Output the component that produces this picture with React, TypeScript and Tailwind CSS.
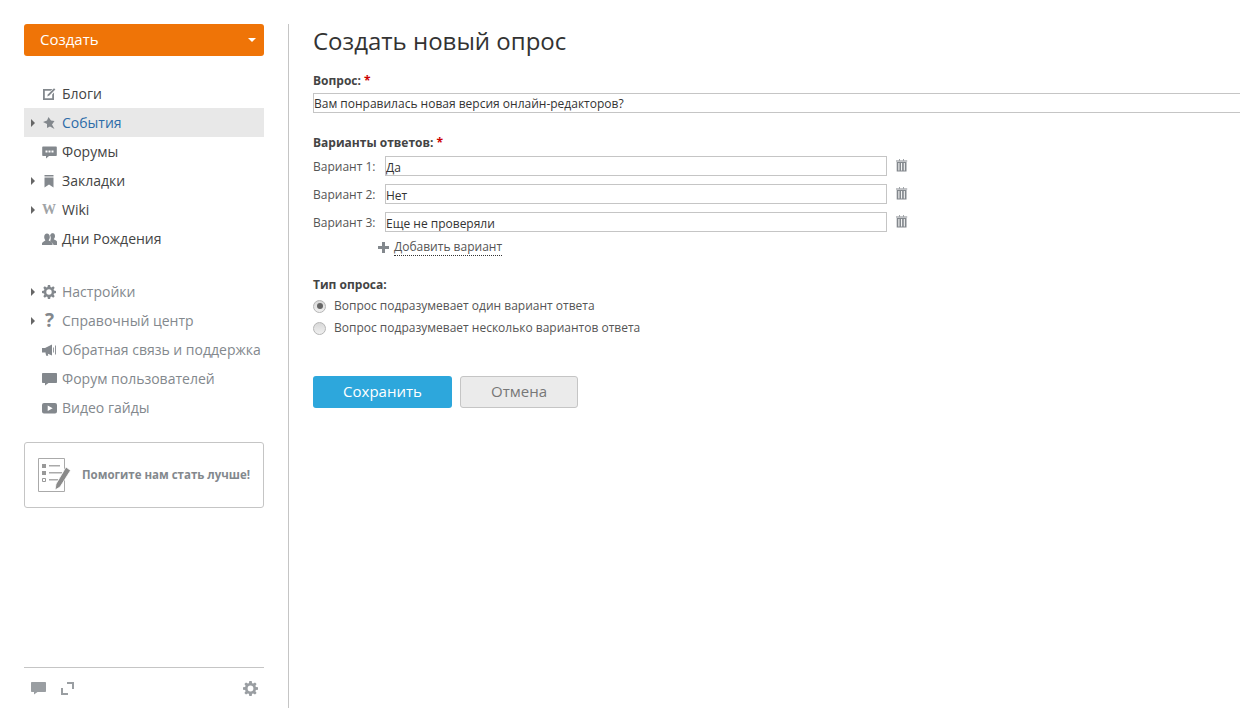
import React from 'react';

const iconClass = 'w-[14px] h-[14px] fill-[#83888d]';

const EditIcon = () => (
  <svg viewBox="0 0 14 14" className={iconClass}>
    <path d="M1 2h9.500L8.600 3.800H2.800v7.400h7.400V7.400L12 5.600V13H1z" />
    <path d="M12 1.200l1.400 1.400-6 6-2.200.8.800-2.200z" />
  </svg>
);
const PinIcon = () => (
  <svg viewBox="0 0 14 14" className={iconClass}>
    <path d="M6.500 1L9 4.500l3.500.5L10 8.500l2.500 4.500L8 10.500 5 12V8L1 6l4-1.500z" />
  </svg>
);
const ForumIcon = () => (
  <svg viewBox="0 0 15 14" className="w-[15px] h-[14px] fill-[#83888d]">
    <path fillRule="evenodd" d="M1 1.500h13a.8.8 0 0 1 .8.8v8a.8.8 0 0 1-.8.8H7l-3 2.400v-2.400H1a.8.8 0 0 1-.8-.8v-8a.8.8 0 0 1 .8-.8zM3.500 5.500v2h2v-2zm3 0v2h2v-2zm3 0v2h2v-2z" />
  </svg>
);
const BookmarkIcon = () => (
  <svg viewBox="0 0 14 14" className={iconClass}>
    <path d="M2.500 1h9v1.600h-9zM2.500 3.600h9V13.500L7 10.500l-4.500 3z" />
  </svg>
);
const PeopleIcon = () => (
  <svg viewBox="0 0 15 14" className="w-[15px] h-[14px] fill-[#83888d]">
    <path d="M10.200 1c1.700 0 2.800 1.300 2.800 3 0 1.200-.5 2.300-1.300 3 .2.700 2.300 1.100 3.300 2.500V13h-3.500c-.3-1.800-2.100-2.700-3.500-3.400.5-1 .8-2.200.8-3.500 0-1-.3-1.900-.7-2.600.5-1.500 1.300-2.500 2.600-2.500z" />
    <path d="M5 1.500c1.700 0 2.800 1.500 2.800 3.500 0 1.200-.5 2.500-1.200 3.200.2.800 3.400 1.200 3.900 3V13H0v-1.800c.5-1.800 3.200-2.200 3.400-3-.7-.7-1.200-2-1.200-3.200 0-2 1.100-3.500 2.800-3.500z" />
  </svg>
);
const GearIcon = ({ cls = iconClass }: { cls?: string }) => (
  <svg viewBox="0 0 14 14" className={cls}>
    <path fillRule="evenodd" d="M5.900 0h2.200l.4 2 1 .4L11.200 1.300l1.500 1.500-1.100 1.700.4 1L14 5.900v2.200l-2 .4-.4 1 1.100 1.700-1.500 1.500-1.700-1.100-1 .4-.4 2H5.900l-.4-2-1-.4-1.700 1.100-1.500-1.500 1.100-1.700-.4-1-2-.4V5.900l2-.4.4-1L1.300 2.800l1.500-1.500 1.700 1.100 1-.4zM7 4.300a2.700 2.700 0 1 0 0 5.400 2.700 2.700 0 0 0 0-5.400z" />
  </svg>
);
const SpeakerIcon = () => (
  <svg viewBox="0 0 15 14" className="w-[15px] h-[14px] fill-[#83888d]">
    <path d="M0 5h3v4.500H0zM3 5l7-3.500v11L3 9.500zM3.500 10h2.200l.5 2.800H4.200z" />
    <path d="M11 4.500h.8v5H11zM13 2.500h.9v9H13z" />
  </svg>
);
const BubbleIcon = ({ cls }: { cls: string }) => (
  <svg viewBox="0 0 15 14" className={cls}>
    <path d="M.8 1h13.400a.8.8 0 0 1 .8.8v8.400a.8.8 0 0 1-.8.8H6.500L3 13.500V11H.8a.8.8 0 0 1-.8-.8V1.800A.8.8 0 0 1 .8 1z" />
  </svg>
);
const VideoIcon = () => (
  <svg viewBox="0 0 15 14" className="w-[15px] h-[14px] fill-[#83888d]">
    <path fillRule="evenodd" d="M2 2h11a2 2 0 0 1 2 2v6.500a2 2 0 0 1-2 2H2a2 2 0 0 1-2-2V4a2 2 0 0 1 2-2zm3.700 2.500v5.500l5-2.750z" />
  </svg>
);
const TrashIcon = () => (
  <svg viewBox="0 0 12 13" className="w-[12px] h-[13px] fill-[#83888d]">
    <path d="M0 1.400h11.200v1H0zM3 .2h1v1H3zM7 .2h1v1H7z" />
    <path fillRule="evenodd" d="M.7 3h9.800v9.600H.7zM2.400 4v7.600h1V4zm2.700 0v7.600h1V4zm2.700 0v7.600h1V4z" />
  </svg>
);

type Item = { label: string; icon: React.ReactNode; arrow?: boolean; active?: boolean };

const topItems: Item[] = [
  { label: 'Блоги', icon: <EditIcon /> },
  { label: 'События', icon: <PinIcon />, arrow: true, active: true },
  { label: 'Форумы', icon: <ForumIcon /> },
  { label: 'Закладки', icon: <BookmarkIcon />, arrow: true },
  { label: 'Wiki', icon: <span className="text-[14px] font-bold text-[#a0a3a6] font-['Liberation_Serif',serif] leading-none">W</span>, arrow: true },
  { label: 'Дни Рождения', icon: <PeopleIcon /> },
];

const bottomItems: Item[] = [
  { label: 'Настройки', icon: <GearIcon />, arrow: true },
  { label: 'Справочный центр', icon: <span className="w-[15px] text-center text-[19px] font-bold text-[#83888d] leading-none">?</span>, arrow: true },
  { label: 'Обратная связь и поддержка', icon: <SpeakerIcon /> },
  { label: 'Форум пользователей', icon: <BubbleIcon cls="w-[15px] h-[14px] fill-[#83888d]" /> },
  { label: 'Видео гайды', icon: <VideoIcon /> },
];

function MenuRow({ item, color }: { item: Item; color: string }) {
  return (
    <div className={`flex items-center h-[29px] text-[14px] whitespace-nowrap ${item.active ? 'bg-[#e8e8e8]' : ''}`}>
      <span className="w-[18px] flex justify-end pr-[7px]">
        {item.arrow && <span className="w-0 h-0 border-y-[4px] border-y-transparent border-l-[4px] border-l-[#666]" />}
      </span>
      <span className="w-[15px] flex justify-start items-center">{item.icon}</span>
      <span className={`ml-[5px] ${item.active ? 'text-[#2d6ca8]' : color}`}>{item.label}</span>
    </div>
  );
}

function Answer({ n, value }: { n: number; value: string }) {
  return (
    <div className="flex items-center h-[20px]">
      <span className="w-[72px] pt-[1px] text-[12px] text-[#555]">Вариант {n}:</span>
      <input readOnly value={value} className="w-[502px] h-[20px] border border-[#c5c5c5] px-0 pt-[2px] text-[12px] text-[#333] outline-none" />
      <span className="ml-[9px] mb-[2px] flex"><TrashIcon /></span>
    </div>
  );
}

function Radio({ checked, label }: { checked?: boolean; label: string }) {
  return (
    <div className="flex items-center h-[14px] text-[12px] text-[#555]">
      <span className="w-[13px] h-[13px] rounded-full border border-[#b5b5b5] bg-linear-to-b from-[#d8d8d8] to-[#f0f0f0] flex items-center justify-center">
        {checked && <span className="w-[6px] h-[6px] rounded-full bg-[#666]" />}
      </span>
      <span className="ml-[8px]">{label}</span>
    </div>
  );
}

export default function App() {
  return (
    <div className="flex h-[708px] w-[1240px] overflow-hidden bg-white font-['Open_Sans',sans-serif] text-[#333]">
      <aside className="w-[240px] ml-[24px] flex flex-col shrink-0">
        <div className="mt-[24px] h-[32px] rounded-[3px] bg-[#ef7407] flex items-center justify-between pl-[16px] pr-[8px] text-white text-[15px]">
          <span className="pb-[1px]">Создать</span>
          <span className="w-0 h-0 border-x-[4px] border-x-transparent border-t-[4px] border-t-white" />
        </div>

        <nav className="mt-[23px]">
          {topItems.map(item => <MenuRow key={item.label} item={item} color="text-[#444]" />)}
        </nav>

        <nav className="mt-[24px]">
          {bottomItems.map(item => <MenuRow key={item.label} item={item} color="text-[#83888d]" />)}
        </nav>

        <div className="mt-[20px] h-[66px] border border-[#c5c5c5] rounded-[3px] flex items-center pl-[13px]">
          <svg viewBox="0 0 33 34" className="w-[33px] h-[34px] shrink-0">
            <path d="M.5.500h26v33H.500z" fill="#fff" stroke="#aaa" />
            <path d="M4 6h4v4H4zM4 13h4v4H4z" fill="#999" />
            <path d="M4.500 20.500h3v3h-3z" fill="none" stroke="#999" />
            <path d="M11 7h11v1.500H11zM11 14h13v1.500H11zM11 21h9v1.500H11z" fill="#aaa" />
            <path d="M28 9l4.500 3.500L22 29l-5 3 1-6z" fill="#8a8a8a" stroke="#fff" strokeWidth="0.8" />
          </svg>
          <span className="ml-[11px] text-[11.5px] font-bold text-[#83888d] whitespace-nowrap">Помогите нам стать лучше!</span>
        </div>

        <div className="mt-auto border-t border-[#c5c5c5] h-[41px] flex items-center px-[7px]">
          <BubbleIcon cls="w-[15px] h-[14px] fill-[#9a9ea2]" />
          <svg viewBox="0 0 13 13" className="w-[13px] h-[13px] ml-[15px] fill-[#9a9ea2]">
            <path d="M6 0h7v7h-2V2H6zM0 6h2v5h5v2H0z" />
          </svg>
          <span className="ml-auto mr-[-1px] flex">
            <GearIcon cls="w-[15px] h-[15px] fill-[#9a9ea2]" />
          </span>
        </div>
      </aside>

      <div className="ml-[24px] mt-[24px] w-px bg-[#c5c5c5] shrink-0" />

      <main className="ml-[24px] flex-1 min-w-0">
        <h1 className="mt-[24px] text-[24px] leading-[34px] text-[#333]">Создать новый опрос</h1>

        <div className="mt-[15px] text-[12px] font-bold leading-[16px] text-[#444]">Вопрос: <span className="text-[#c00]">*</span></div>
        <input readOnly value="Вам понравилась новая версия онлайн-редакторов?" className="mt-[4px] block w-[1000px] h-[20px] border border-[#c5c5c5] px-0 text-[12px] text-[#333] outline-none" />

        <div className="mt-[22px] text-[12px] font-bold leading-[16px] text-[#444]">Варианты ответов: <span className="text-[#c00]">*</span></div>
        <div className="mt-[5px] flex flex-col gap-[8px]">
          <Answer n={1} value="Да" />
          <Answer n={2} value="Нет" />
          <Answer n={3} value="Еще не проверяли" />
        </div>
        <div className="mt-[6px] ml-[65px] flex items-center h-[18px]">
          <span className="relative w-[11px] h-[11px]">
            <span className="absolute left-[4px] top-0 w-[3px] h-[11px] bg-[#83888d]" />
            <span className="absolute left-0 top-[4px] w-[11px] h-[3px] bg-[#83888d]" />
          </span>
          <span className="ml-[5px] text-[12px] leading-[16px] text-[#555] border-b border-dotted border-[#333]">Добавить вариант</span>
        </div>

        <div className="mt-[21px] text-[12px] font-bold leading-[16px] text-[#444]">Тип опроса:</div>
        <div className="mt-[6px] flex flex-col gap-[8px]">
          <Radio checked label="Вопрос подразумевает один вариант ответа" />
          <Radio label="Вопрос подразумевает несколько вариантов ответа" />
        </div>

        <div className="mt-[41px] flex gap-[8px] text-[15px]">
          <button className="w-[139px] h-[32px] pb-[1px] rounded-[3px] bg-[#2da7dc] text-white">Сохранить</button>
          <button className="w-[118px] h-[32px] pb-[1px] rounded-[3px] bg-[#ebebeb] border border-[#c5c5c5] text-[#777]">Отмена</button>
        </div>
      </main>
    </div>
  );
}
